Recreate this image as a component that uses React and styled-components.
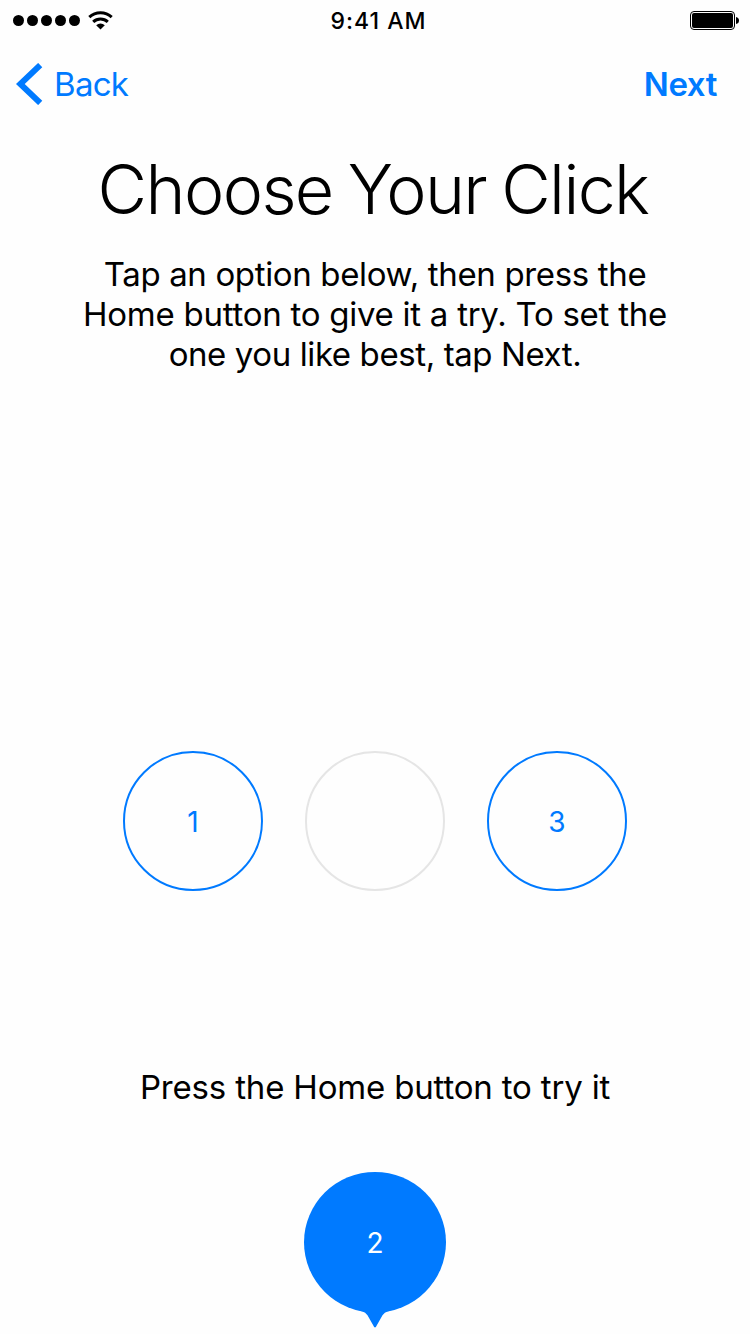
import React from 'react';
import styled, { createGlobalStyle } from 'styled-components';

const Global = createGlobalStyle`
  * { box-sizing: border-box; }
  body { margin: 0; background: #fefefe; font-family: Inter, "Liberation Sans", sans-serif; color: #000; }
`;
const Screen = styled.main`
  width: 750px; height: 1334px; overflow: hidden;
  display: flex; flex-direction: column; align-items: center;
`;
const StatusBar = styled.div`
  width: 100%; height: 40px; padding: 0 11px 0 13px; flex: none;
  display: grid; grid-template-columns: 1fr auto 1fr; align-items: center;
`;
const Signal = styled.div`display: flex; align-items: center; gap: 3px;`;
const Dot = styled.i`width: 11px; height: 11px; border-radius: 50%; background: #000;`;
const Wifi = styled.svg`margin-left: 5px; display: block;`;
const Clock = styled.time`
  padding: 2px 0 0 5px; font-size: 23px; line-height: 28px; font-weight: 500;
  letter-spacing: 1px; white-space: nowrap;
`;
const Battery = styled.svg`justify-self: end; display: block;`;
const NavBar = styled.nav`
  width: 100%; height: 88px; flex: none; padding: 0 33px 0 16px;
  display: flex; align-items: center; justify-content: space-between;
`;
const NavButton = styled.button`
  border: 0; background: none; padding: 0; color: #007aff;
  font: ${p => (p.$strong ? 600 : 400)} 33px/40px Inter, sans-serif;
  letter-spacing: ${p => p.$track || 0}px;
  display: flex; align-items: center; gap: 11px;
`;
const Title = styled.h1`
  margin: 16px 0 0; padding-right: 4px; font-size: 68px; line-height: 90px; font-weight: 300;
  letter-spacing: -1.6px; word-spacing: -2.5px; white-space: nowrap;
`;
const Copy = styled.p`margin: 20px 0 0; text-align: center;`;
const Line = styled.span`
  display: block; font-size: 33px; line-height: 40px; white-space: nowrap;
  letter-spacing: ${p => p.$track || 0}px;
`;
const Options = styled.div`display: flex; gap: 42px; margin-top: 377px;`;
const Option = styled.button`
  width: 140px; height: 140px; padding: 1px 0 0; border-radius: 50%; background: none;
  border: 2px solid ${p => (p.$empty ? '#e5e5e5' : '#007aff')};
  color: #007aff; font: 400 28px/34px Inter, sans-serif;
`;
const Hint = styled.p`margin: 176px 0 0;`;
const Pin = styled.div`margin-top: 65px; display: grid; width: 142px; height: 157px;`;
const PinShape = styled.svg`grid-area: 1 / 1; display: block;`;
const PinLabel = styled.span`
  grid-area: 1 / 1; height: 142px; display: flex; align-items: center; justify-content: center;
  color: #fff; font-size: 28px; z-index: 1;
`;

export default function App() {
  return (
    <Screen>
      <Global />
      <StatusBar>
        <Signal>
          {[0, 1, 2, 3, 4].map(n => <Dot key={n} />)}
          <Wifi width="25" height="19" viewBox="0 0 25 19">
            <g fill="none" stroke="#000" strokeWidth="3">
              <path d="M1.300 6.200a16.500 16.500 0 0 1 22.400 0" />
              <path d="M5.200 10.800a10.600 10.600 0 0 1 14.600 0" />
            </g>
            <path d="M12.500 18.600 8.200 14.300a6 6 0 0 1 8.600 0Z" />
          </Wifi>
        </Signal>
        <Clock>9:41 AM</Clock>
        <Battery width="49" height="20" viewBox="0 0 49 20">
          <rect x=".5" y="1.500" width="44" height="18" rx="3.5" fill="none" stroke="#000" />
          <rect x="2" y="3" width="41" height="15" rx="2" />
          <path d="M46 7q3 .5 3 3.500t-3 3.500Z" />
        </Battery>
      </StatusBar>
      <NavBar>
        <NavButton $track={-0.7}>
          <svg width="27" height="42" viewBox="0 0 27 42">
            <path d="M24.2 2.100 4.300 21l19.900 18.900" fill="none" stroke="#007aff" strokeWidth="6" />
          </svg>
          Back
        </NavButton>
        <NavButton $strong $track={-0.4}>Next</NavButton>
      </NavBar>
      <Title>Choose Your Click</Title>
      <Copy>
        <Line $track={-0.35}>Tap an option below, then press the</Line>
        <Line $track={-0.26}>Home button to give it a try. To set the</Line>
        <Line $track={-0.4}>one you like best, tap Next.</Line>
      </Copy>
      <Options>
        <Option>1</Option>
        <Option $empty aria-label="2" />
        <Option>3</Option>
      </Options>
      <Hint><Line $track={-0.17}>Press the Home button to try it</Line></Hint>
      <Pin>
        <PinShape width="142" height="157" viewBox="0 0 142 157" fill="#007aff">
          <ellipse cx="71" cy="70.300" rx="71" ry="70.300" />
          <path d="M54 138.500 58 139.200q3.500.8 5.500 4l6.500 11.500q1 1.500 2 0l6.500-11.500q2-3.200 5.500-4l4-.7Z" />
        </PinShape>
        <PinLabel>2</PinLabel>
      </Pin>
    </Screen>
  );
}
